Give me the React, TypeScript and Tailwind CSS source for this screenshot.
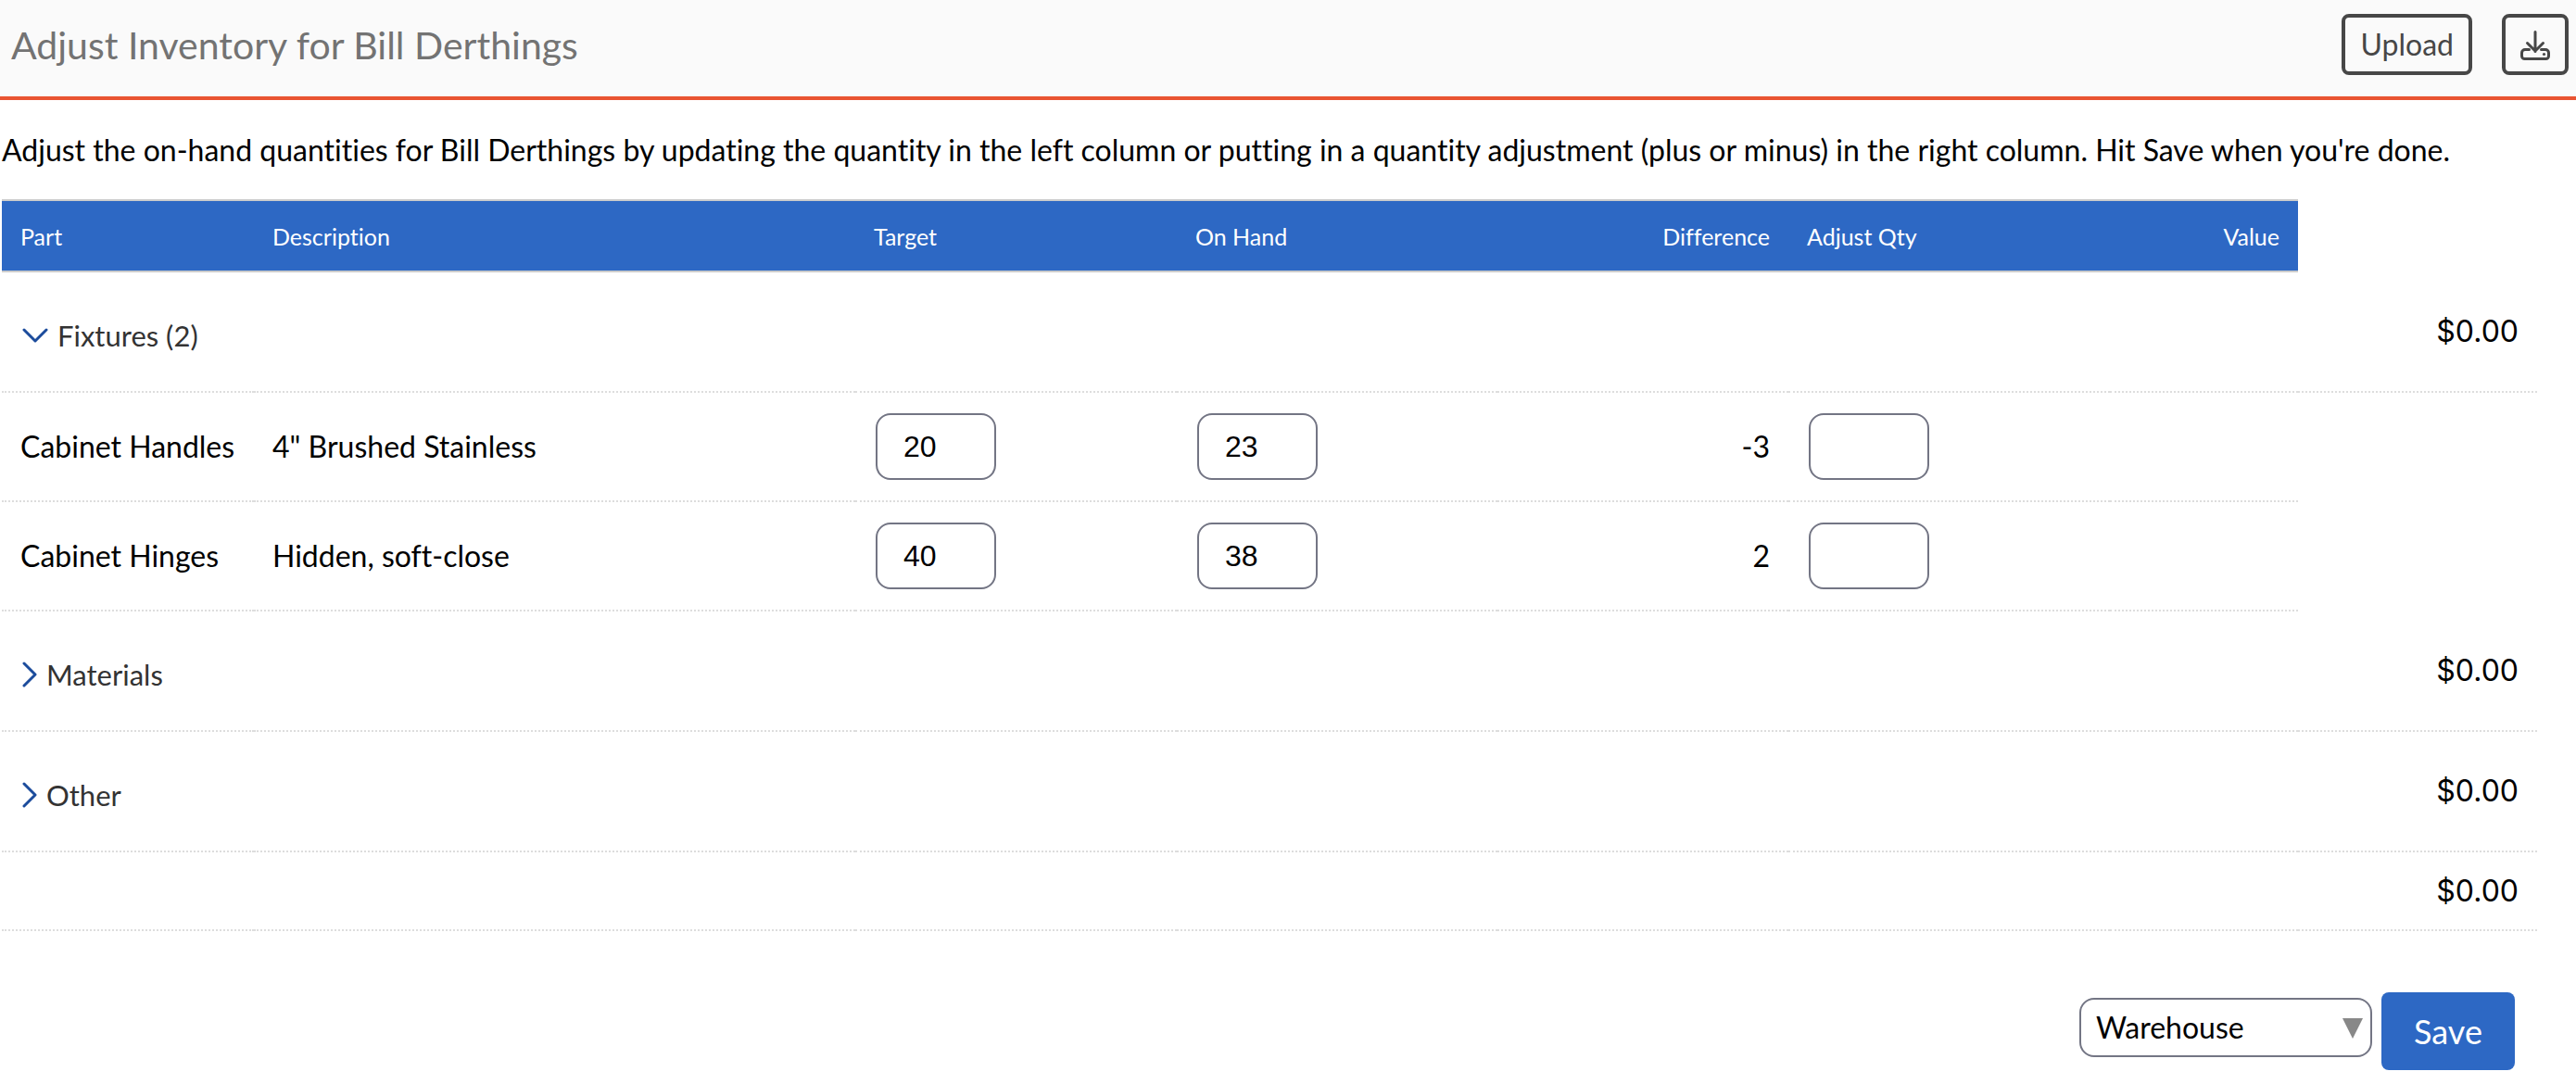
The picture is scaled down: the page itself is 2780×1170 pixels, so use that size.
import { useState } from "react";

type Item = { part: string; description: string; target: string; onHand: string };
type Group = { name: string; value: string; items: Item[] };

const GROUPS: Group[] = [
  {
    name: "Fixtures",
    value: "$0.00",
    items: [
      { part: "Cabinet Handles", description: '4" Brushed Stainless', target: "20", onHand: "23" },
      { part: "Cabinet Hinges", description: "Hidden, soft-close", target: "40", onHand: "38" },
    ],
  },
  { name: "Materials", value: "$0.00", items: [] },
  { name: "Other", value: "$0.00", items: [] },
];

const CELL = "border-b-2 border-dotted border-[#dddddd] px-5";
const HEAD = "h-[79px] border-y-2 border-[#cccccc] bg-[#2d68c4] px-5 text-[25px] font-normal text-white";

function ChevronDown() {
  return (
    <svg width="28" height="16" viewBox="0 0 28 16" fill="none" stroke="#1c4c9c" strokeWidth="3" strokeLinecap="round" strokeLinejoin="round" aria-hidden="true">
      <path d="M2 2l12 12L26 2" />
    </svg>
  );
}

function ChevronRight() {
  return (
    <svg width="16" height="28" viewBox="0 0 16 28" fill="none" stroke="#1c4c9c" strokeWidth="3" strokeLinecap="round" strokeLinejoin="round" aria-hidden="true">
      <path d="M2 2l12 12L2 26" />
    </svg>
  );
}

function DownloadIcon() {
  return (
    <svg width="32" height="33" viewBox="0 0 32 33" fill="none" stroke="currentColor" strokeWidth="3" strokeLinecap="round" strokeLinejoin="round" aria-hidden="true">
      <path d="M16 2.5v21M7.5 14.5l8.5 8.500 8.500-8.500" />
      <path d="M9.5 21.5H5a3.500 3.500 0 0 0-3.500 3.500v3.500a3 3 0 0 0 3 3h23a3 3 0 0 0 3-3V25a3.500 3.500 0 0 0-3.500-3.500h-4.500" />
      <circle cx="25.500" cy="26.500" r="1.600" fill="currentColor" stroke="none" />
    </svg>
  );
}

function QtyInput({ label, initial }: { label: string; initial: string }) {
  const [value, setValue] = useState(initial);
  return (
    <input
      aria-label={label}
      inputMode="numeric"
      value={value}
      onChange={(e) => setValue(e.target.value)}
      className="ml-0.5 block h-[72px] w-[130px] rounded-2xl border-2 border-[#737584] bg-white px-7 font-['Liberation_Sans',sans-serif] text-black"
    />
  );
}

function GroupRows({ group }: { group: Group }) {
  const [open, setOpen] = useState(group.items.length > 0);
  return (
    <>
      <tr>
        <td className={`${CELL} h-[130px]`}>
          <button
            type="button"
            aria-expanded={open}
            onClick={() => setOpen(!open)}
            className="flex items-center gap-2.5 pt-2 pl-0.5 text-[31px] leading-10 whitespace-nowrap text-[#333333]"
          >
            {open ? <ChevronDown /> : <ChevronRight />}
            {group.name}
            {open ? ` (${group.items.length})` : ""}
          </button>
        </td>
        <td className={CELL} />
        <td className={CELL} />
        <td className={CELL} />
        <td className={CELL} />
        <td className={CELL} />
        <td className={CELL} />
        <td className={`${CELL} text-right font-['Inter',sans-serif]`}>{group.value}</td>
      </tr>
      {open &&
        group.items.map((item) => (
          <tr key={item.part}>
            <td className={`${CELL} h-[118px] whitespace-nowrap`}>{item.part}</td>
            <td className={CELL}>{item.description}</td>
            <td className={CELL}>
              <QtyInput label={`${item.part} target`} initial={item.target} />
            </td>
            <td className={CELL}>
              <QtyInput label={`${item.part} on hand`} initial={item.onHand} />
            </td>
            <td className={`${CELL} text-right`}>{Number(item.target) - Number(item.onHand)}</td>
            <td className={CELL}>
              <QtyInput label={`${item.part} adjust quantity`} initial="" />
            </td>
            <td className={CELL} />
          </tr>
        ))}
    </>
  );
}

export default function App() {
  return (
    <div className="bg-white font-['Lato',sans-serif] text-[32px] leading-10 text-black [font-variant-ligatures:none]">
      <header className="flex items-center justify-between border-b-4 border-[#e95432] bg-[#fafafa] pt-[15px] pr-2 pb-[23px] pl-3">
        <h1 className="pt-0.5 text-[41px] leading-[48px] text-[#737373]">Adjust Inventory for Bill Derthings</h1>
        <div className="flex gap-8 text-[#474747]">
          <button type="button" className="h-[66px] rounded-lg border-4 border-[#474747] px-4">
            Upload
          </button>
          <button type="button" aria-label="Download" className="flex h-[66px] w-[72px] items-center justify-center rounded-lg border-4 border-[#474747]">
            <DownloadIcon />
          </button>
        </div>
      </header>

      <main className="pr-[42px] pl-0.5">
        <p className="pt-[34px] pb-[33px]">
          Adjust the on-hand quantities for Bill Derthings by updating the quantity in the left column or putting in a quantity adjustment (plus or minus) in the right column. Hit Save when you're done.
        </p>

        <table className="w-full table-fixed border-separate border-spacing-0">
          <colgroup>
            <col className="w-[272px]" />
            <col />
            <col className="w-[347px]" />
            <col className="w-[346px]" />
            <col className="w-[314px]" />
            <col className="w-[347px]" />
            <col className="w-[203px]" />
            <col className="w-[258px]" />
          </colgroup>
          <thead>
            <tr>
              <th scope="col" className={`${HEAD} text-left`}>Part</th>
              <th scope="col" className={`${HEAD} text-left`}>Description</th>
              <th scope="col" className={`${HEAD} text-left`}>Target</th>
              <th scope="col" className={`${HEAD} text-left`}>On Hand</th>
              <th scope="col" className={`${HEAD} text-right`}>Difference</th>
              <th scope="col" className={`${HEAD} text-left`}>Adjust Qty</th>
              <th scope="col" className={`${HEAD} text-right`}>Value</th>
            </tr>
          </thead>
          <tbody>
            {GROUPS.map((group) => (
              <GroupRows key={group.name} group={group} />
            ))}
          </tbody>
          <tfoot>
            <tr>
              <td className={`${CELL} h-[85px]`} />
              <td className={CELL} />
              <td className={CELL} />
              <td className={CELL} />
              <td className={CELL} />
              <td className={CELL} />
              <td className={CELL} />
              <td className={`${CELL} text-right font-['Inter',sans-serif]`}>$0.00</td>
            </tr>
          </tfoot>
        </table>

        <form className="flex items-start justify-end gap-2.5 pt-[66px] pr-6 pb-4" onSubmit={(e) => e.preventDefault()}>
          <div className="relative mt-1.5">
            <select
              aria-label="Location"
              className="h-16 w-[316px] appearance-none rounded-2xl border-2 border-[#737584] bg-white pr-12 pl-4"
              defaultValue="Warehouse"
            >
              <option>Warehouse</option>
            </select>
            <svg className="pointer-events-none absolute top-[22px] right-2.5" width="22" height="22" viewBox="0 0 22 22" fill="#888888" aria-hidden="true">
              <path d="M0 0h22L11 22z" />
            </svg>
          </div>
          <button type="submit" className="h-[84px] w-36 rounded-lg bg-[#2d68c4] text-[36px] text-white">
            Save
          </button>
        </form>
      </main>
    </div>
  );
}
